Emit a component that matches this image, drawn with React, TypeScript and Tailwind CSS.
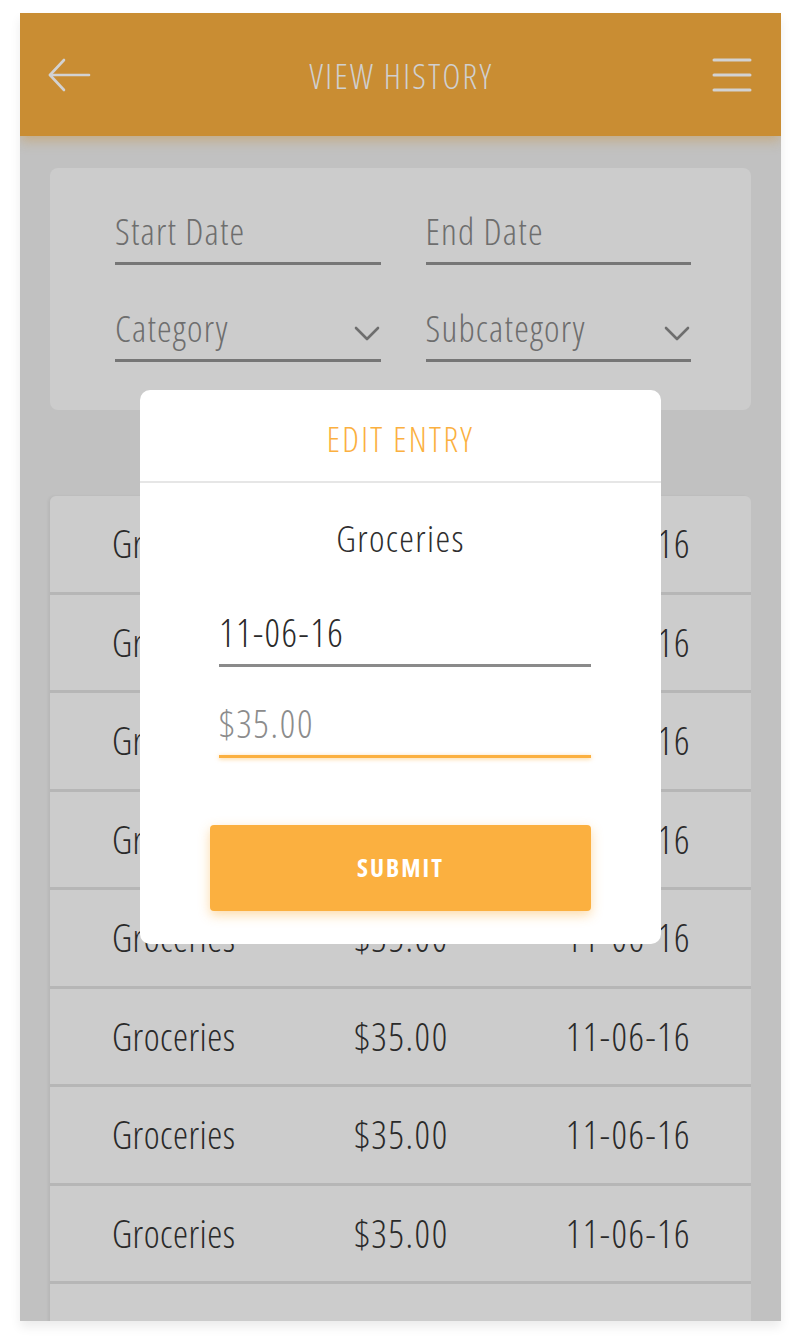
const rows = Array.from({ length: 8 }, () => ({
  category: 'Groceries',
  amount: '$35.00',
  date: '11-06-16',
}))

const font = "font-['Open_Sans','Noto_Sans',sans-serif] font-stretch-condensed font-[350]"

function BackArrow() {
  return (
    <svg width="44" height="36" viewBox="0 0 44 36" fill="none" stroke="#d2d2d2" strokeWidth="2.6" strokeLinecap="round" strokeLinejoin="round">
      <path d="M3 18 H42" />
      <path d="M17 3 L3 18 L17 33" />
    </svg>
  )
}

function MenuIcon() {
  return (
    <svg width="40" height="34" viewBox="0 0 40 34" fill="none" stroke="#d2d2d2" strokeWidth="3" strokeLinecap="round">
      <path d="M2 2 H38" />
      <path d="M2 17 H38" />
      <path d="M2 32 H38" />
    </svg>
  )
}

function Chevron() {
  return (
    <svg width="26" height="17" viewBox="0 0 26 17" fill="none" stroke="#6e6e6e" strokeWidth="2.6" strokeLinecap="round" strokeLinejoin="round">
      <path d="M2 3 L13 14 L24 3" />
    </svg>
  )
}

function FilterField({ label, select }: { label: string; select?: boolean }) {
  return (
    <div className="flex h-[59px] items-center justify-between border-b-[3px] border-[#767676] pb-[6px]">
      <span className="text-[37px] tracking-[1.2px] text-[#6e6e6e]">{label}</span>
      {select && (
        <span className="mr-[1px] mt-[10px]">
          <Chevron />
        </span>
      )}
    </div>
  )
}

export default function App() {
  return (
    <div className={`min-h-[1336px] bg-white pt-[13px] ${font}`}>
      <div className="relative ml-[20px] h-[1308px] w-[761px] overflow-hidden bg-[#c1c1c1] shadow-[0_6px_10px_rgba(0,0,0,0.08)]">
        <header className="relative z-10 flex h-[123px] items-center justify-between bg-[#c98d33] pl-[27px] pr-[29px] shadow-[0_4px_12px_rgba(201,141,51,0.45)]">
          <BackArrow />
          <h1 className="mt-[4px] text-[34px] tracking-[2.3px] text-[#d0d0d0]">VIEW HISTORY</h1>
          <MenuIcon />
        </header>

        <div className="px-[30px] pt-[32px]">
          <div className="grid h-[242px] grid-cols-2 content-start gap-x-[45px] gap-y-[38px] rounded-lg bg-[#cccccc] pl-[65px] pr-[60px] pt-[38px]">
            <FilterField label="Start Date" />
            <FilterField label="End Date" />
            <FilterField label="Category" select />
            <FilterField label="Subcategory" select />
          </div>

          <div className="mt-[86px] overflow-hidden rounded-t-md shadow-[-2px_0_3px_rgba(0,0,0,0.05)]">
            {rows.map((row, i) => (
              <div
                key={i}
                className="grid h-[98.5px] grid-cols-[1fr_auto_1fr] items-center border-b-[3px] border-[#b6b6b6] bg-[#cccccc] pl-[62px] pr-[60px] text-[38px] text-[#2a2a2a]"
              >
                <span className="tracking-[0.5px]">{row.category}</span>
                <span className="tracking-[1.6px]">{row.amount}</span>
                <span className="text-right tracking-[1.5px]">{row.date}</span>
              </div>
            ))}
            <div className="h-[98.5px] bg-[#cccccc]" />
          </div>
        </div>

        <div className="absolute left-[120px] top-[377px] z-20 h-[554px] w-[521px] rounded-[10px] bg-white">
          <div className="flex h-[93px] items-center justify-center border-b-2 border-[#e6e6e6]">
            <h2 className="mt-[8px] text-[34px] tracking-[2.3px] text-[#fbb040]">EDIT ENTRY</h2>
          </div>
          <p className="mt-[31px] text-center text-[37px] leading-[48px] tracking-[1.4px] text-[#2e2e2e]">Groceries</p>
          <div className="ml-[79px] mr-[70px] mt-[39px]">
            <div className="flex h-[63px] items-center text-[38px] tracking-[1.5px] text-[#2a2a2a]">11-06-16</div>
            <div className="h-[3px] bg-[#8a8a8a]" />
          </div>
          <div className="ml-[79px] mr-[70px] mt-[25px]">
            <div className="flex h-[63px] items-center text-[38px] tracking-[1.7px] text-[#8c8c8c]">$35.00</div>
            <div className="h-[3px] bg-[#fbb040] shadow-[0_1px_4px_rgba(251,176,64,0.6)]" />
          </div>
          <button className="mx-[70px] mt-[67px] flex h-[86px] w-[381px] items-center justify-center rounded-[4px] bg-[#fbb040] text-[25px] font-bold tracking-[2px] text-white shadow-[0_4px_12px_rgba(251,176,64,0.45)]">
            SUBMIT
          </button>
        </div>
      </div>
    </div>
  )
}
